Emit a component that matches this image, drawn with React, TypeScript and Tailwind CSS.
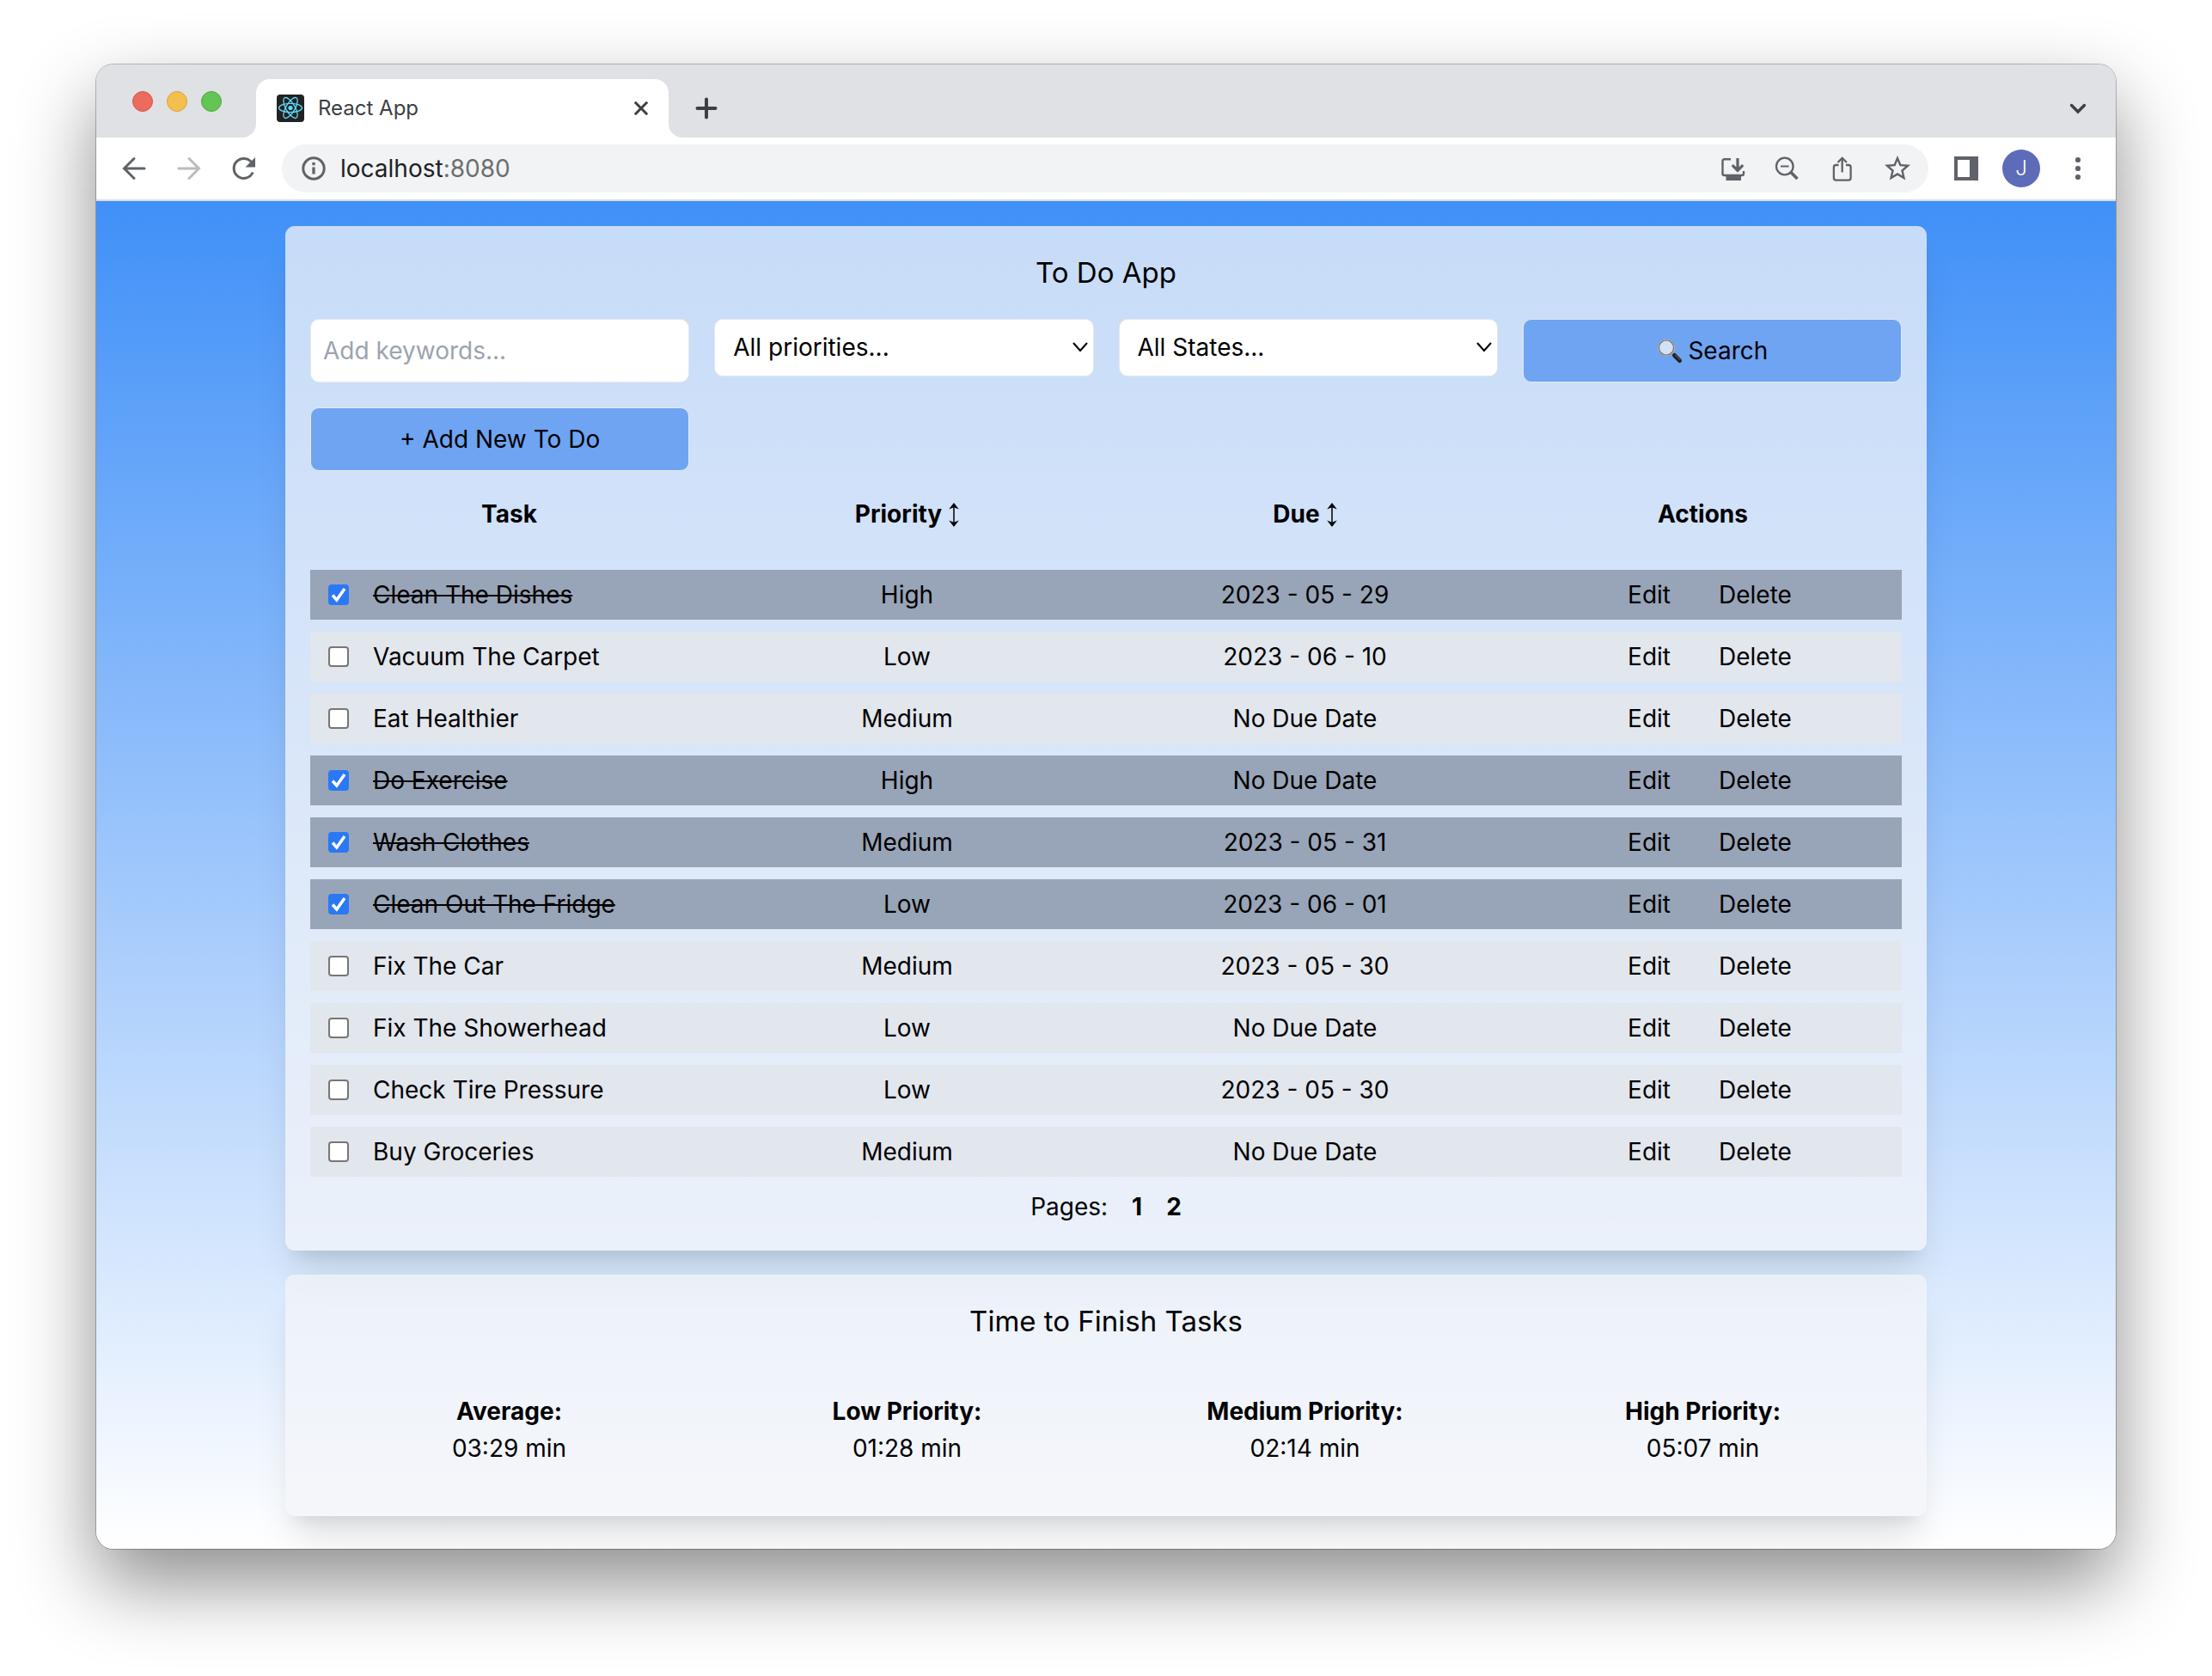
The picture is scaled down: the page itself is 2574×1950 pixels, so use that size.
import { useState } from "react";
import type { ReactNode } from "react";

type Task = { name: string; priority: string; due: string; done: boolean };

const initialTasks: Task[] = [
  { name: "Clean The Dishes", priority: "High", due: "2023 - 05 - 29", done: true },
  { name: "Vacuum The Carpet", priority: "Low", due: "2023 - 06 - 10", done: false },
  { name: "Eat Healthier", priority: "Medium", due: "No Due Date", done: false },
  { name: "Do Exercise", priority: "High", due: "No Due Date", done: true },
  { name: "Wash Clothes", priority: "Medium", due: "2023 - 05 - 31", done: true },
  { name: "Clean Out The Fridge", priority: "Low", due: "2023 - 06 - 01", done: true },
  { name: "Fix The Car", priority: "Medium", due: "2023 - 05 - 30", done: false },
  { name: "Fix The Showerhead", priority: "Low", due: "No Due Date", done: false },
  { name: "Check Tire Pressure", priority: "Low", due: "2023 - 05 - 30", done: false },
  { name: "Buy Groceries", priority: "Medium", due: "No Due Date", done: false },
];

const stats = [
  { label: "Average:", value: "03:29 min" },
  { label: "Low Priority:", value: "01:28 min" },
  { label: "Medium Priority:", value: "02:14 min" },
  { label: "High Priority:", value: "05:07 min" },
];

function Icon({ children }: { children: ReactNode }) {
  return (
    <svg viewBox="0 0 32 32" fill="none" stroke="currentColor" strokeWidth="3" className="size-8" aria-hidden="true">
      {children}
    </svg>
  );
}

function IconButton({ label, children, className = "text-[#5f6368]" }: { label: string; children: ReactNode; className?: string }) {
  return (
    <button type="button" aria-label={label} className={className}>
      {children}
    </button>
  );
}

function TabStrip() {
  return (
    <div className="flex h-[85px] items-end bg-[#dfe1e5] pl-[42px] pr-7">
      <div className="flex items-center gap-4 self-center">
        <button type="button" aria-label="Close window" className="size-6 rounded-full border border-[#d9544b] bg-[#ed6a5f]" />
        <button type="button" aria-label="Minimize window" className="size-6 rounded-full border border-[#dba13c] bg-[#f5bf4f]" />
        <button type="button" aria-label="Zoom window" className="size-6 rounded-full border border-[#51a73e] bg-[#62c554]" />
      </div>
      <svg viewBox="0 0 16 16" className="ml-6 size-4 text-white" fill="currentColor" aria-hidden="true">
        <path d="M16 0v16H0A16 16 0 0 0 16 0Z" />
      </svg>
      <div className="flex h-[68px] w-[480px] items-center rounded-t-2xl bg-white px-6">
        <svg viewBox="0 0 32 32" className="size-8" fill="none" stroke="#61dafb" strokeWidth="1.3" aria-hidden="true">
          <rect width="32" height="32" rx="4" fill="#222" stroke="none" />
          <circle cx="16" cy="15.5" r="2.6" fill="#61dafb" stroke="none" />
          <ellipse cx="16" cy="15.5" rx="13.5" ry="5.2" />
          <ellipse cx="16" cy="15.5" rx="13.5" ry="5.2" transform="rotate(60 16 15.5)" />
          <ellipse cx="16" cy="15.5" rx="13.5" ry="5.2" transform="rotate(120 16 15.5)" />
        </svg>
        <span className="ml-4 flex-1 text-2xl text-[#3c4043]">React App</span>
        <IconButton label="Close tab" className="text-[#3c4043]">
          <svg viewBox="0 0 16 16" className="size-4" stroke="currentColor" strokeWidth="3" aria-hidden="true">
            <path d="M0.8 0.8 15.2 15.2M15.2 0.8 0.8 15.2" />
          </svg>
        </IconButton>
      </div>
      <svg viewBox="0 0 16 16" className="size-4 text-white" fill="currentColor" aria-hidden="true">
        <path d="M0 0v16h16A16 16 0 0 1 0 0Z" />
      </svg>
      <div className="flex h-[68px] flex-1 items-center justify-between pl-3">
        <IconButton label="New tab" className="text-[#3c4043]">
          <Icon>
            <path d="M5.500 16h21M16 5.500v21" strokeWidth="4" strokeLinecap="round" />
          </Icon>
        </IconButton>
        <IconButton label="Search tabs" className="text-[#3c4043]">
          <Icon>
            <path d="m8.500 12.500 7.500 7.500 7.500-7.500" strokeWidth="3.400" strokeLinecap="round" />
          </Icon>
        </IconButton>
      </div>
    </div>
  );
}

function Toolbar() {
  return (
    <div className="flex h-[74px] items-center border-b-2 border-[#dadce0] bg-white px-7">
      <div className="flex gap-8">
        <IconButton label="Back">
          <Icon>
            <path d="M28 16H5M16 4.500 4.500 16 16 27.500" strokeLinecap="round" />
          </Icon>
        </IconButton>
        <IconButton label="Forward" className="text-[#babcbe]">
          <Icon>
            <path d="M4 16h23M16 4.500 27.500 16 16 27.500" strokeLinecap="round" />
          </Icon>
        </IconButton>
        <IconButton label="Reload">
          <Icon>
            <path d="M26.200 20.500a11.500 11.500 0 1 1-2-12.300" />
            <path d="M29 3v11.500H17.500Z" fill="currentColor" stroke="none" />
          </Icon>
        </IconButton>
      </div>
      <div className="ml-7 flex h-14 flex-1 items-center rounded-full bg-[#f1f3f4] pl-[21px] pr-[18px] text-[#5f6368]">
        <Icon>
          <circle cx="16" cy="16" r="12.200" />
          <path d="M16 14.500v8M16 9v3.300" strokeWidth="3.300" />
        </Icon>
        <div role="textbox" aria-label="Address" className="ml-[15px] flex-1 text-[28px] leading-8 text-[#202124]">
          localhost<span className="text-[#6b6e72]">:8080</span>
        </div>
        <div className="flex items-center gap-[31px]">
          <IconButton label="Install">
            <Icon>
              <path d="M13 5.200H5.500a2 2 0 0 0-2 2V22a2 2 0 0 0 2 2H26a2 2 0 0 0 2-2v-3" strokeWidth="2.400" />
              <path d="M7.500 24h17.500v6H7.500Z" fill="currentColor" stroke="none" />
              <path d="M21 4v14M14.800 12.200l6.200 6.200 6.200-6.200" strokeWidth="3.200" />
            </Icon>
          </IconButton>
          <IconButton label="Zoom level">
            <Icon>
              <circle cx="12.800" cy="13.500" r="9.800" strokeWidth="2.300" />
              <path d="M8 13.500h9.600" strokeWidth="2" />
              <path d="m20 20.500 7.500 7.500" strokeWidth="3.600" />
            </Icon>
          </IconButton>
          <IconButton label="Share">
            <Icon>
              <path d="M12.500 12H9.500a2.600 2.600 0 0 0-2.600 2.600v12.500a2.600 2.600 0 0 0 2.600 2.600h14.500a2.600 2.600 0 0 0 2.600-2.600V14.600a2.600 2.600 0 0 0-2.600-2.600h-3M16.700 20.500V4M11.500 9l5.200-5.200L21.900 9" strokeWidth="2.300" />
            </Icon>
          </IconButton>
          <IconButton label="Bookmark">
            <svg viewBox="0 0 24 24" className="size-9" fill="currentColor" aria-hidden="true">
              <path d="M22 9.240l-7.190-.620L12 2 9.190 8.630 2 9.240l5.460 4.730L5.820 21 12 17.270 18.180 21l-1.630-7.030L22 9.240zM12 15.400l-3.760 2.270 1-4.280-3.320-2.880 4.380-.380L12 6.100l1.710 4.040 4.380.380-3.320 2.880 1 4.280L12 15.400z" />
            </svg>
          </IconButton>
        </div>
      </div>
      <div className="ml-[30px] flex items-center gap-7">
        <IconButton label="Side panel">
          <svg viewBox="0 0 28 28" className="size-7" aria-hidden="true">
            <path d="M0 0h28v28H0ZM4 4v20h14V4Z" fill="currentColor" fillRule="evenodd" />
          </svg>
        </IconButton>
        <button type="button" className="size-11 rounded-full bg-[#5d6bb8] text-2xl font-light text-white">
          J
        </button>
        <IconButton label="Menu">
          <svg viewBox="0 0 32 32" className="size-8" fill="currentColor" aria-hidden="true">
            <circle cx="16" cy="6" r="3.100" />
            <circle cx="16" cy="16" r="3.100" />
            <circle cx="16" cy="26" r="3.100" />
          </svg>
        </IconButton>
      </div>
    </div>
  );
}

function CheckBox({ checked, label, onChange }: { checked: boolean; label: string; onChange: () => void }) {
  return (
    <span className="relative inline-flex size-6">
      <input
        type="checkbox"
        aria-label={label}
        checked={checked}
        onChange={onChange}
        className="size-6 appearance-none rounded-[4px] border-2 border-[#767676] bg-white checked:border-[#2a78f6] checked:bg-[#2a78f6]"
      />
      {checked && (
        <svg viewBox="0 0 24 24" className="pointer-events-none absolute inset-0 size-6" fill="none" stroke="white" strokeWidth="3.500" aria-hidden="true">
          <path d="m5 12.500 4.800 5.500L19 5" />
        </svg>
      )}
    </span>
  );
}

const control = "rounded-[10px] border border-[#e5e7eb]";

function Dropdown({ label, text }: { label: string; text: string }) {
  return (
    <div className="relative self-start">
      <select aria-label={label} className={`${control} h-[67px] w-full appearance-none bg-white px-[21px]`}>
        <option>{text}</option>
      </select>
      <svg viewBox="0 0 18 12" className="pointer-events-none absolute right-[7px] top-[27px] h-3 w-[18px]" fill="none" stroke="black" strokeWidth="2.100" aria-hidden="true">
        <path d="m1 1 8 9 8-9" />
      </svg>
    </div>
  );
}

function Magnifier() {
  return (
    <svg viewBox="0 0 32 32" className="size-8" fill="none" aria-hidden="true">
      <path d="m19 19 2.500 2.500" stroke="#8b8f96" strokeWidth="3" />
      <path d="m21.500 21.500 6 6" stroke="#222" strokeWidth="5" strokeLinecap="round" />
      <path d="m22.500 21 5.500 5.500" stroke="#777" strokeWidth="1" strokeLinecap="round" />
      <circle cx="12" cy="12.500" r="9" fill="#d3e0f5" stroke="#6f7379" strokeWidth="2.200" />
      <circle cx="12" cy="12.500" r="9.600" stroke="#c9ced6" strokeWidth="0.800" />
    </svg>
  );
}

function SortableHeader({ text }: { text: string }) {
  return (
    <th className="p-0 font-bold">
      <button type="button" className="inline-flex items-center gap-2">
        {text}
        <svg viewBox="0 0 12 28" className="h-7 w-3" aria-hidden="true">
          <path d="M6 3v22" stroke="black" strokeWidth="1.500" />
          <path d="M6 0 11.800 7.500 6 5.200 0.200 7.500ZM6 28l5.800-7.500L6 22.800 0.200 20.500Z" fill="black" />
        </svg>
      </button>
    </th>
  );
}

export default function App() {
  const [tasks, setTasks] = useState(initialTasks);
  const toggle = (name: string) => setTasks(tasks.map((t) => (t.name === name ? { ...t, done: !t.done } : t)));

  return (
    <div className="bg-white px-28 pb-[147px] pt-[75px] font-['Inter',sans-serif]">
      <div className="overflow-hidden rounded-[20px] shadow-[0_0_0_1px_rgba(0,0,0,0.25),0_40px_90px_rgba(0,0,0,0.45)]">
        <TabStrip />
        <Toolbar />
        <main className="flex flex-col gap-7 bg-linear-to-b/srgb from-[#4090f8] to-white px-7 pb-[38px] pt-[29px] text-[28px] leading-[43px] text-black">
          <section className="mx-auto w-full max-w-[1910px] rounded-[11px] bg-[#f3f4f8]/75 p-[29px] shadow-[0_36px_45px_-9px_rgba(0,0,0,0.1),0_14px_18px_-11px_rgba(0,0,0,0.1)]">
            <h1 className="text-center text-[33px] leading-[50px]">To Do App</h1>
            <div className="mt-[29px] grid grid-cols-4 gap-[29px]">
              <input type="text" aria-label="Keywords" placeholder="Add keywords..." className={`${control} h-[74px] bg-white px-[14px] placeholder:text-[#9ca3af]`} />
              <Dropdown label="Priority" text="All priorities..." />
              <Dropdown label="State" text="All States..." />
              <button type="button" className={`${control} flex h-[74px] items-center justify-center gap-[5px] bg-[#6ea4f2]`}>
                <Magnifier />
                Search
              </button>
              <button type="button" className={`${control} h-[74px] bg-[#6ea4f2]`}>+ Add New To Do</button>
            </div>
            <table className="mt-[15px] w-full table-fixed border-separate border-spacing-x-0 border-spacing-y-[14px]">
              <thead>
                <tr className="h-[72px] align-top">
                  <th className="p-0 font-bold">Task</th>
                  <SortableHeader text="Priority" />
                  <SortableHeader text="Due" />
                  <th className="p-0 font-bold">Actions</th>
                </tr>
              </thead>
              <tbody>
                {tasks.map((t) => (
                  <tr key={t.name} className={t.done ? "h-[58px] bg-[#98a4b7]" : "h-[58px] bg-[#e2e6ed]"}>
                    <td className="p-0">
                      <div className="flex items-center gap-7 pl-[21px]">
                        <CheckBox checked={t.done} label={t.name} onChange={() => toggle(t.name)} />
                        <span className={t.done ? "line-through" : ""}>{t.name}</span>
                      </div>
                    </td>
                    <td className="p-0 text-center">{t.priority}</td>
                    <td className="p-0 text-center">{t.due}</td>
                    <td className="p-0">
                      <div className="flex justify-center gap-14 pl-4">
                        <button type="button">Edit</button>
                        <button type="button">Delete</button>
                      </div>
                    </td>
                  </tr>
                ))}
              </tbody>
            </table>
            <nav className="flex justify-center gap-7" aria-label="Pages">
              <span>Pages:</span>
              <a href="#1" className="font-bold">1</a>
              <a href="#2" className="font-bold">2</a>
            </nav>
          </section>
          <section className="mx-auto w-full max-w-[1910px] rounded-[11px] bg-[#f3f4f8]/75 px-[29px] pb-[57px] pt-[29px] shadow-[0_36px_45px_-9px_rgba(0,0,0,0.1),0_14px_18px_-11px_rgba(0,0,0,0.1)]">
            <h2 className="text-center text-[33px] leading-[50px]">Time to Finish Tasks</h2>
            <dl className="mt-[59px] grid grid-cols-4 text-center">
              {stats.map((s) => (
                <div key={s.label}>
                  <dt className="font-bold">{s.label}</dt>
                  <dd>{s.value}</dd>
                </div>
              ))}
            </dl>
          </section>
        </main>
      </div>
    </div>
  );
}
